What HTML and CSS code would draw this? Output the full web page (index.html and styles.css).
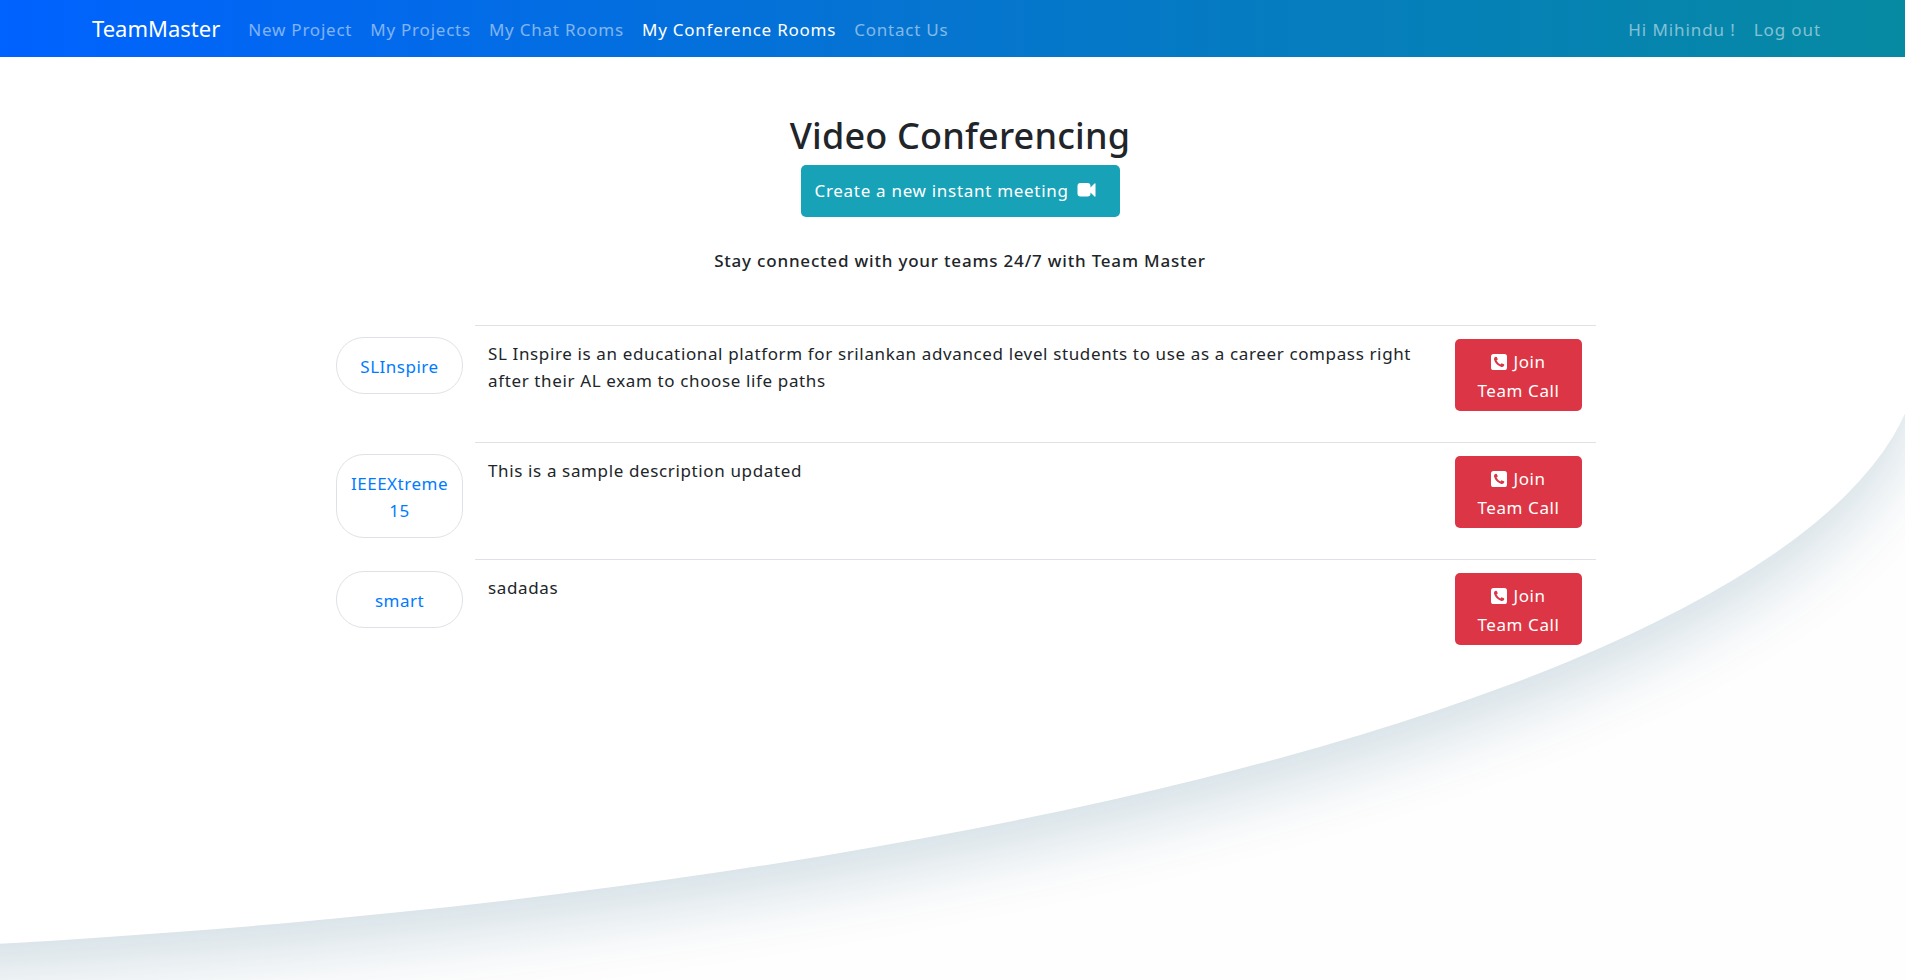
FILE: index.html
```html
<!DOCTYPE html>
<html lang="en">
<head>
<meta charset="utf-8">
<title>TeamMaster</title>
<link rel="stylesheet" href="styles.css">
</head>
<body>
<div class="backdrop"><div class="curve"></div></div>
<nav class="navbar">
  <a class="brand">TeamMaster</a>
  <div class="links"><a>New Project</a><a>My Projects</a><a>My Chat Rooms</a><a class="active">My Conference Rooms</a><a>Contact Us</a></div>
  <div class="links user"><a>Hi Mihindu !</a><a>Log out</a></div>
</nav>
<main class="content">
  <header class="intro">
    <h2 class="title">Video Conferencing</h2>
    <button class="create"><span>Create a new instant meeting</span>
      <svg class="camera" viewBox="0 0 18 14"><path d="M3 0h7a3 3 0 0 1 3 3v1.500L17 .5q1-.6 1 .5v12q0 1-1 .4L13 9.500V10.500a3 3 0 0 1-3 3H3a3 3 0 0 1-3-3V3a3 3 0 0 1 3-3z"/></svg>
    </button>
    <p class="tagline">Stay connected with your teams 24/7 with Team Master</p>
  </header>
  <div class="rooms">
    <div class="room"><a class="pill">SLInspire</a><div class="detail"><p class="desc">SL Inspire is an educational platform for srilankan advanced level students to use as a career compass right<br>after their AL exam to choose life paths</p><button class="join"><span class="row"><svg class="phone" viewBox="0 0 16 16"><rect width="16" height="16" rx="2.600"/><path d="M4.700 2.800Q2.600 3.500 3 5.600C4.200 9.500 6.600 12 10.400 13q2.200.4 2.900-1.700.2-.7-.3-1l-2-.9q-.4-.2-.8.2l-.8 1Q6.900 9.300 5.500 6.600l1-.8q.4-.3.200-.8L5.700 3q-.3-.5-1-.2z"/></svg>Join</span><span class="row">Team Call</span></button></div></div>
    <div class="room"><a class="pill">IEEEXtreme<br>15</a><div class="detail"><p class="desc">This is a sample description updated</p><button class="join"><span class="row"><svg class="phone" viewBox="0 0 16 16"><rect width="16" height="16" rx="2.600"/><path d="M4.700 2.800Q2.600 3.500 3 5.600C4.200 9.500 6.600 12 10.400 13q2.200.4 2.900-1.700.2-.7-.3-1l-2-.9q-.4-.2-.8.2l-.8 1Q6.900 9.300 5.500 6.600l1-.8q.4-.3.200-.8L5.700 3q-.3-.5-1-.2z"/></svg>Join</span><span class="row">Team Call</span></button></div></div>
    <div class="room"><a class="pill">smart</a><div class="detail"><p class="desc">sadadas</p><button class="join"><span class="row"><svg class="phone" viewBox="0 0 16 16"><rect width="16" height="16" rx="2.600"/><path d="M4.700 2.800Q2.600 3.500 3 5.600C4.200 9.500 6.600 12 10.400 13q2.200.4 2.900-1.700.2-.7-.3-1l-2-.9q-.4-.2-.8.2l-.8 1Q6.900 9.300 5.500 6.600l1-.8q.4-.3.200-.8L5.700 3q-.3-.5-1-.2z"/></svg>Join</span><span class="row">Team Call</span></button></div></div>
  </div>
</main>
</body>
</html>
```
FILE: styles.css
```css
* { box-sizing: border-box; }
body { margin: 0; height: 980px; overflow: hidden; background: #fefefe; color: #212529; font: 17px/27px "Noto Sans", "Open Sans", sans-serif; letter-spacing: 0.5px; }
.backdrop { position: absolute; inset: 0; overflow: hidden; z-index: -1; }
.curve { position: absolute; left: -3012px; top: 0; width: 4932px; height: 959px; border-radius: 0 0 50% 50% / 0 0 613px 613px; background: #fff; box-shadow: 0 30px 65px rgba(8, 75, 110, 0.165); }
.navbar { height: 57px; padding: 0 84px 0 92px; display: flex; align-items: center; background: linear-gradient(90deg, #0062ff, #0575cf 50%, #068aa2); white-space: nowrap; }
.brand { color: #fff; font-size: 22px; letter-spacing: 0; margin-right: 28px; }
.links { display: flex; gap: 18px; padding-top: 1px; color: rgba(255, 255, 255, 0.5); font-size: 17px; letter-spacing: 0.77px; }
.active { color: #fff; }
.user { margin-left: auto; letter-spacing: 0.9px; }
.content { width: 1260px; margin-left: 336px; padding-top: 54px; white-space: nowrap; }
.intro { padding-right: 12px; display: flex; flex-direction: column; align-items: center; }
.title { margin: 0; height: 54px; font-size: 36px; line-height: 50px; font-weight: 500; letter-spacing: 0.18px; }
button { border: 0; border-radius: 5px; color: #fff; font: inherit; letter-spacing: 0.6px; }
.create { width: 319px; height: 52px; padding: 0 14px 2px; background: #18a2b8; display: flex; align-items: center; gap: 8px; letter-spacing: 0.7px; }
.camera { width: 19px; height: 14px; fill: #fff; }
.tagline { margin: 30px 0 51px; font-weight: 500; letter-spacing: 0.8px; }
.rooms { display: flex; flex-direction: column; }
.room { height: 117px; display: flex; align-items: flex-start; gap: 12px; }
.pill { width: 127px; margin-top: 12px; padding: 15px 10px 13px; border: 1px solid #dee2e6; border-radius: 28px; background: #fff; color: #007bff; text-align: center; }
.detail { flex: 1; display: flex; justify-content: space-between; align-items: flex-start; border-top: 1px solid #dee2e6; padding: 13px 14px 0 13px; }
.desc { margin: 1px 0 0; letter-spacing: 0.63px; }
.join { width: 127px; height: 72px; padding: 8px 0 0; background: #dc3545; display: flex; flex-direction: column; line-height: 29px; }
.row { display: flex; width: 100%; height: 29px; align-items: center; justify-content: center; gap: 6px; }
.phone { width: 16px; height: 16px; }
.phone rect { fill: #fff; }
.phone path { fill: #dc3545; }
```
